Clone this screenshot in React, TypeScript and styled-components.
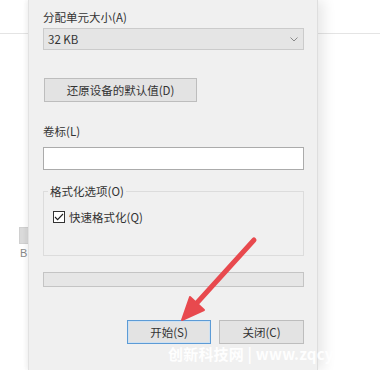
import React from 'react';
import styled, { createGlobalStyle } from 'styled-components';

const GlobalStyle = createGlobalStyle`
  html, body {
    margin: 0;
    padding: 0;
    background: #ffffff;
  }
  body {
    font-family: "Noto Sans CJK SC", "Noto Sans", sans-serif;
    color: #333;
  }
`;

const Page = styled.div`
  position: relative;
  display: flex;
  width: 380px;
  height: 370px;
  overflow: hidden;
  background: #fff;
`;

const SidePane = styled.div<{ $width: number }>`
  width: ${(p) => p.$width}px;
  flex: 1 0 auto;
  display: flex;
  flex-direction: column;
  align-items: flex-end;
`;

const HeaderLine = styled.div`
  align-self: stretch;
  height: 34px;
  border-bottom: 1px solid #e4e4e4;
  box-sizing: border-box;
`;

const ScrollThumb = styled.div`
  margin-top: 193px;
  width: 8px;
  height: 15px;
  background: #dadada;
  border: 1px solid #d0d0d0;
  border-right: none;
`;

const SideLetter = styled.div`
  margin-top: 2px;
  width: 8px;
  font-family: "Liberation Sans", sans-serif;
  font-size: 11px;
  line-height: 14px;
  color: #888;
`;

const Dialog = styled.div`
  width: 290px;
  flex: 0 0 auto;
  height: 370px;
  box-sizing: border-box;
  padding: 9px 13px 0 14px;
  background: #f0f0f0;
  border-left: 1px solid #e2e2e2;
  border-right: 1px solid #dedede;
  box-shadow: 6px 0 12px rgba(0, 0, 0, 0.09), -2px 0 4px rgba(0, 0, 0, 0.05);
  display: flex;
  flex-direction: column;
  z-index: 1;
`;

const Label = styled.div<{ $top?: number }>`
  margin-top: ${(p) => p.$top ?? 0}px;
  font-size: 11.5px;
  line-height: 16px;
  height: 16px;
`;

const Select = styled.div`
  margin-top: 3px;
  height: 22px;
  box-sizing: border-box;
  background: #e5e5e5;
  border: 1px solid #cbcbcb;
  display: flex;
  align-items: center;
  justify-content: space-between;
  padding: 0 5px 0 4px;
  font-size: 11.5px;
`;

const Button = styled.div<{ $width: number; $primary?: boolean }>`
  width: ${(p) => p.$width}px;
  height: 24px;
  box-sizing: border-box;
  background: #e3e3e3;
  border: 1px solid ${(p) => (p.$primary ? '#5c9bd6' : '#bdbdbd')};
  box-shadow: ${(p) => (p.$primary ? 'inset 0 0 0 1px #cfe1f1' : 'none')};
  display: flex;
  align-items: center;
  justify-content: center;
  font-size: 11.5px;
`;

const ResetRow = styled.div`
  margin-top: 28px;
  padding-left: 1px;
`;

const TextInput = styled.div`
  margin-top: 8px;
  height: 23px;
  box-sizing: border-box;
  background: #fff;
  border: 1px solid #ababab;
`;

const Group = styled.fieldset`
  margin: 14px 0 0;
  padding: 13px 8px 32px 8px;
  border: 1px solid #dcdcdc;
  min-width: 0;
`;

const Legend = styled.legend`
  padding: 0 2px;
  margin-left: -4px;
  font-size: 11.5px;
  line-height: 14px;
`;

const CheckRow = styled.div`
  display: flex;
  align-items: center;
  gap: 4px;
  height: 12px;
  font-size: 11.5px;
  margin-left: 1px;
`;

const CheckBox = styled.div`
  width: 12px;
  height: 12px;
  box-sizing: border-box;
  border: 1px solid #333;
  background: #fff;
  display: flex;
  align-items: center;
  justify-content: center;
`;

const Progress = styled.div`
  margin-top: 16px;
  height: 15px;
  box-sizing: border-box;
  background: #e6e6e6;
  border: 1px solid #c4c4c4;
`;

const ButtonRow = styled.div`
  margin-top: 33px;
  display: flex;
  justify-content: flex-end;
  gap: 8px;
`;

const Arrow = styled.svg`
  position: absolute;
  left: 0;
  top: 0;
  z-index: 2;
  pointer-events: none;
`;

const Watermark = styled.div`
  position: absolute;
  left: 168px;
  top: 344px;
  z-index: 3;
  font-size: 15px;
  font-weight: 700;
  line-height: 20px;
  color: rgba(255, 255, 255, 0.95);
  white-space: nowrap;
  letter-spacing: 0.2px;
`;

export default function App() {
  return (
    <>
      <GlobalStyle />
      <Page>
        <SidePane $width={28}>
          <HeaderLine />
          <ScrollThumb />
          <SideLetter>B</SideLetter>
        </SidePane>

        <Dialog>
          <Label>分配单元大小(A)</Label>
          <Select>
            <span>32 KB</span>
            <svg width="8" height="5" viewBox="0 0 8 5">
              <polyline points="0.5,0.5 4,4 7.5,0.5" fill="none" stroke="#8a8a8a" strokeWidth="1" />
            </svg>
          </Select>

          <ResetRow>
            <Button $width={153}>还原设备的默认值(D)</Button>
          </ResetRow>

          <Label $top={21}>卷标(L)</Label>
          <TextInput />

          <Group>
            <Legend>格式化选项(O)</Legend>
            <CheckRow>
              <CheckBox>
                <svg width="10" height="8" viewBox="0 0 10 8">
                  <polyline points="1,4 3.6,6.6 9,1" fill="none" stroke="#222" strokeWidth="1.1" />
                </svg>
              </CheckBox>
              快速格式化(Q)
            </CheckRow>
          </Group>

          <Progress />

          <ButtonRow>
            <Button $width={84} $primary>开始(S)</Button>
            <Button $width={85}>关闭(C)</Button>
          </ButtonRow>
        </Dialog>

        <SidePane $width={62}>
          <HeaderLine />
        </SidePane>

        {/* 红色箭头标注 */}
        <Arrow width="380" height="370" viewBox="0 0 380 370">
          <line x1="254" y1="240" x2="195" y2="305" stroke="#e8494e" strokeWidth="5" strokeLinecap="round" />
          <polygon points="182,320 204,310 190,297" fill="#e8494e" stroke="#e8494e" strokeWidth="2" strokeLinejoin="round" />
        </Arrow>

        <Watermark>创新科技网 | www.zqcy</Watermark>
      </Page>
    </>
  );
}
